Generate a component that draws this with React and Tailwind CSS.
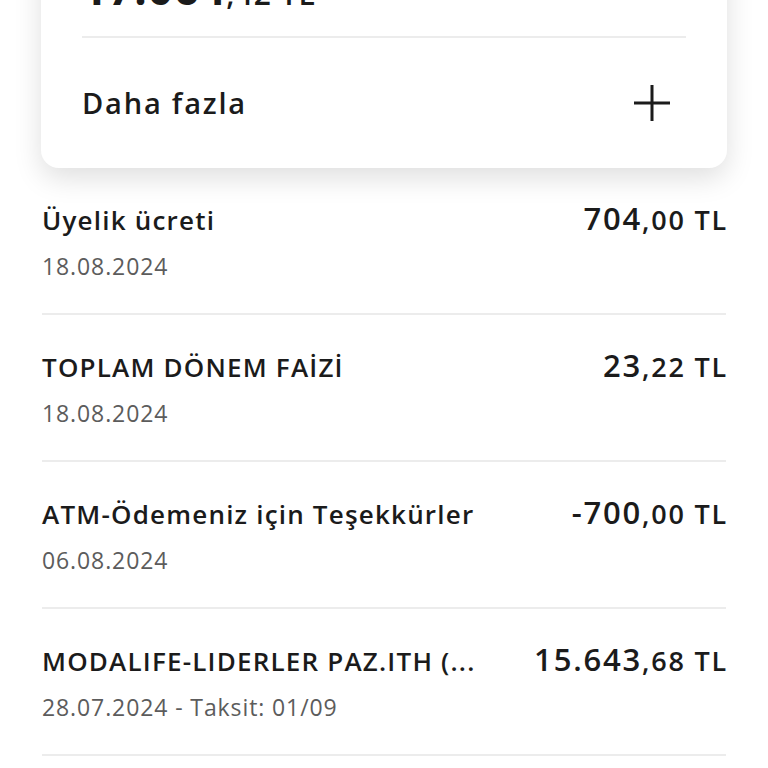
export default function App() {
  const rows = [
    { title: "Üyelik ücreti", date: "18.08.2024", main: "704", dec: ",00 TL" },
    { title: "TOPLAM DÖNEM FAİZİ", date: "18.08.2024", main: "23", dec: ",22 TL" },
    { title: "ATM-Ödemeniz için Teşekkürler", date: "06.08.2024", main: "-700", dec: ",00 TL" },
    { title: "MODALIFE-LIDERLER PAZ.ITH (...", date: "28.07.2024 - Taksit: 01/09", main: "15.643", dec: ",68 TL" },
  ];

  return (
    <div className="w-[768px] h-[768px] overflow-hidden bg-white text-[#1b1b1b]" style={{ fontFamily: "'Open Sans', 'Noto Sans', sans-serif" }}>
      {/* summary card */}
      <div className="mx-[41px] -mt-[72px] rounded-[18px] bg-white px-[41px] shadow-[0_10px_28px_rgba(0,0,0,0.13)]">
        <div className="flex items-baseline h-[108px] pt-[38px] tracking-[1px]">
          <span className="text-[44px] font-bold leading-[44px]">17.064</span>
          <span className="text-[30px] font-semibold leading-[44px]">,42 TL</span>
        </div>
        <div className="h-[2px] bg-[#ececec]" />
        <div className="flex h-[130px] items-center justify-between">
          <span className="text-[29px] font-semibold tracking-[1.8px]">Daha fazla</span>
          <svg width="40" height="40" viewBox="0 0 40 40" className="mr-[14px]">
            <path d="M2 20H38M20 2V38" stroke="#1b1b1b" strokeWidth="3" />
          </svg>
        </div>
      </div>

      {/* transactions */}
      <div className="mx-[42px]">
        {rows.map((r) => (
          <div key={r.title} className="border-b-2 border-[#ececec] pt-[36px] pb-[32px]">
            <div className="flex items-center justify-between h-[34px]">
              <span className="text-[26px] font-semibold leading-[34px] tracking-[1.2px] whitespace-nowrap -mt-[3px]">{r.title}</span>
              <span className="leading-[34px] font-semibold tracking-[1.8px] whitespace-nowrap -mr-[2px]">
                <span className="text-[31px]">{r.main}</span>
                <span className="text-[27px]">{r.dec}</span>
              </span>
            </div>
            <div className="mt-[13px] text-[23px] leading-[30px] tracking-[0.9px] text-[#5c5c5c]">{r.date}</div>
          </div>
        ))}
      </div>
    </div>
  );
}
